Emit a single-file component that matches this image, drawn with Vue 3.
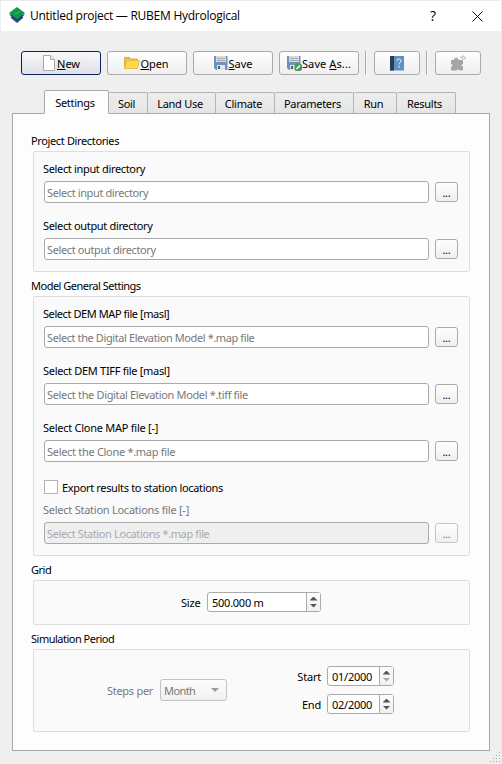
<script setup>
import { ref } from 'vue'

const tabs = [
  { name: 'Settings', w: 65 },
  { name: 'Soil', w: 39 },
  { name: 'Land Use', w: 68 },
  { name: 'Climate', w: 59 },
  { name: 'Parameters', w: 79 },
  { name: 'Run', w: 43 },
  { name: 'Results', w: 59 },
]
const active = ref('Settings')

const directories = [
  { label: 'Select input directory', hint: 'Select input directory' },
  { label: 'Select output directory', hint: 'Select output directory' },
]
const files = [
  { label: 'Select DEM MAP file [masl]', hint: 'Select the Digital Elevation Model *.map file' },
  { label: 'Select DEM TIFF file [masl]', hint: 'Select the Digital Elevation Model *.tiff file' },
  { label: 'Select Clone MAP file [-]', hint: 'Select the Clone *.map file' },
]
const dates = [
  { label: 'Start', value: '01/2000', atMin: true },
  { label: 'End', value: '02/2000', atMin: false },
]
const gripRows = [1, 2, 3, 4]
</script>

<template>
  <div class="window">
    <header class="titlebar">
      <svg class="logo" width="16" height="16" viewBox="0 0 16 16">
        <path d="M1.500 9.500h13l-1 2L8 16l-5.500-4.500z" fill="#2c4a8c" />
        <path d="M0 7.500h16L8 13.500z" fill="#1c3468" />
        <path d="M0 6L8 0l8 6-8 6.500z" fill="#0a9a4c" />
        <path d="M6 5.500l1.500 1.500L10.500 4" fill="none" stroke="#5fbf88" />
      </svg>
      <span class="title">Untitled project — RUBEM Hydrological</span>
      <span class="whatsthis">?</span>
      <svg class="close" width="11" height="11" viewBox="0 0 11 11">
        <path d="M.5.5l10 10M10.500.5l-10 10" stroke="#111" fill="none" />
      </svg>
    </header>

    <nav class="toolbar">
      <button class="tool default">
        <svg width="16" height="16" viewBox="0 0 16 16">
          <path d="M2.500.5h7l4 4v11h-11z" fill="#fff" stroke="#aaa" />
          <path d="M9.500.5v4h4" fill="#eee" stroke="#aaa" />
        </svg><span class="t"><u>N</u>ew</span>
      </button>
      <button class="tool">
        <svg width="16" height="16" viewBox="0 0 16 16">
          <path d="M.5 13.500v-11h5l1 1.500h7v2" fill="#e9bf4a" stroke="#d9b048" />
          <path d="M.5 13.500l2.500-8h12.500l-2 8z" fill="#ffd850" stroke="#e6be48" />
        </svg><span class="t"><u>O</u>pen</span>
      </button>
      <button class="tool">
        <svg width="16" height="16" viewBox="0 0 16 16">
          <path d="M1 1h13.500v14H3l-2-2z" fill="#6f92b9" />
          <path d="M3 1h10v6H3z" fill="#d9d9d9" />
          <path d="M4 3.500h8M4 5.500h8" stroke="#aaa" />
          <path d="M4 10h8v5H4z" fill="#e4e4e4" /><path d="M5 11h2v3H5z" fill="#4f5d6e" />
        </svg><span class="t"><u>S</u>ave</span>
      </button>
      <button class="tool">
        <svg width="16" height="16" viewBox="0 0 16 16">
          <path d="M1 1h13.500v14H3l-2-2z" fill="#6f92b9" />
          <path d="M3 1h10v6H3z" fill="#d9d9d9" />
          <path d="M4 3.500h8M4 5.500h8" stroke="#aaa" />
          <path d="M4 10h8v5H4z" fill="#e4e4e4" /><path d="M5 11h2v3H5z" fill="#4f5d6e" />
          <rect x="8.500" y="8.500" width="7.500" height="7.500" rx="2.500" fill="#4b9a57" />
          <path d="M10.500 14l3.500-3.500" stroke="#fff" stroke-width="1.500" />
        </svg><span class="t wide-text">Save <u>A</u>s...</span>
      </button>
      <i class="sep"></i>
      <button class="tool small">
        <svg width="16" height="16" viewBox="0 0 16 16">
          <path d="M1 1h14v14.500H1z" fill="#5f8fc6" /><path d="M1 1h4v14.500H1z" fill="#2b3c54" />
          <path d="M8 6c0-3 4-2.500 4 0 0 1.500-2 1.700-2 3.500M10 11v1.500" stroke="#fff" fill="none" />
        </svg>
      </button>
      <i class="sep"></i>
      <button class="tool small">
        <svg width="16" height="16" viewBox="0 0 16 16">
          <path d="M1.500 5.500h3c-1-3 4.500-3 3.500 0h4.500v3.500c-2 0-2 2.500 0 2.500v3.500H9.500c0-1.500-3-1.500-3 0h-5v-3c2 0 2-3 0-3z" fill="#a6a6a6" stroke="#a0a0a0" />
          <path d="M10 2l2 .5 1-2 1 1.500 1.500.5-1 2-2-.5z" fill="#eee" stroke="#b4b4b4" stroke-width=".8" />
        </svg>
      </button>
    </nav>

    <div class="tabs">
      <button
        v-for="tab in tabs" :key="tab.name" class="tab" :class="{ active: active === tab.name }"
        :style="{ width: tab.w + 'px' }" @click="active = tab.name"
      ><span>{{ tab.name }}</span></button>
    </div>

    <main class="pane">
      <h2>Project Directories</h2>
      <section class="group dirs">
        <div v-for="d in directories" :key="d.label" class="field">
          <label>{{ d.label }}</label>
          <div class="row"><div class="input">{{ d.hint }}</div><button class="browse">...</button></div>
        </div>
      </section>

      <h2>Model General Settings</h2>
      <section class="group model">
        <div v-for="f in files" :key="f.label" class="field">
          <label>{{ f.label }}</label>
          <div class="row"><div class="input">{{ f.hint }}</div><button class="browse">...</button></div>
        </div>
        <div class="check"><i class="box"></i><span>Export results to station locations</span></div>
        <div class="field off">
          <label>Select Station Locations file [-]</label>
          <div class="row"><div class="input">Select Station Locations *.map file</div><button class="browse">...</button></div>
        </div>
      </section>

      <h2>Grid</h2>
      <section class="group grid">
        <label>Size</label>
        <div class="spin wide">
          <span class="value">500.000 m</span>
          <span class="steps"><i class="up"></i><i class="down"></i></span>
        </div>
      </section>

      <h2>Simulation Period</h2>
      <section class="group period">
        <label class="muted">Steps per</label>
        <div class="select"><span>Month</span><i class="down"></i></div>
        <div class="dates">
          <div v-for="d in dates" :key="d.label" class="date">
            <label>{{ d.label }}</label>
            <div class="spin">
              <span class="value">{{ d.value }}</span>
              <span class="steps"><i class="up"></i><i class="down" :class="{ dim: d.atMin }"></i></span>
            </div>
          </div>
        </div>
      </section>
    </main>

    <svg class="grip" width="11" height="11" viewBox="0 0 11 11">
      <template v-for="r in gripRows" :key="r">
        <rect v-for="c in r" :key="c" :x="13 - c * 3" :y="r * 3 - 2" width="1" height="1" fill="#aaa" />
      </template>
    </svg>
  </div>
</template>

<style>
body { margin: 0; background: #efefef; }
</style>

<style scoped>
* { box-sizing: border-box; }
.window {
  position: relative; width: 502px; height: 764px; background: #efefef; color: #000;
  font: 11px/14px "Noto Sans", "Open Sans", sans-serif; letter-spacing: -0.34px;
  border: 1px solid #ececec; border-bottom: 0; overflow: hidden; white-space: nowrap;
}
button { font: inherit; letter-spacing: inherit; color: inherit; padding: 0; margin: 0; }
.titlebar { height: 30px; background: #fff; display: flex; align-items: center; padding-left: 8px; }
.logo { margin-bottom: 2px; }
.title { margin-left: 5px; width: 400px; font: 12px/16px "Open Sans", "Noto Sans", sans-serif; letter-spacing: -0.26px; }
.whatsthis { width: 42px; font: 14px/16px "Open Sans", sans-serif; }
.toolbar { display: flex; height: 24px; margin: 20px 0 0 20px; align-items: center; gap: 6px; }
.tool {
  width: 80px; height: 24px; border: 1px solid #aaa; border-radius: 3px; flex: none;
  background: linear-gradient(#fefefe, #efefef); display: flex; align-items: center; justify-content: center;
}
.tool.default { border-color: #0a1f5c; background: linear-gradient(#f8f8fa, #dfe1e8); }
.tool svg { flex: none; margin-bottom: 1px; }
.tool.small { width: 46px; }
.tool .t { padding-top: 2px; letter-spacing: -0.05px; margin-right: 1px; }
.tool .wide-text { letter-spacing: 0.1px; }
.sep { width: 2px; height: 24px; border-left: 1px solid #aaa; border-right: 1px solid #fafafa; margin-right: 1px; }
.tabs { display: flex; align-items: flex-end; height: 24px; margin: 15px 0 0 43px; position: relative; z-index: 1; }
.tab {
  height: 22px; border: 1px solid #b4b4b4; border-left: 0; border-bottom-color: #aaa; border-radius: 2px 2px 0 0;
  background: linear-gradient(#ededed, #e5e5e5); flex: none; padding: 1px 3px 0 0; letter-spacing: -0.28px;
}
.tab.active { height: 24px; background: #fdfdfd; border: 1px solid #aaa; border-bottom-color: #fdfdfd; }
.pane {
  margin: -1px 0 0 11px; width: 478px; height: 638px; border: 1px solid #a8a8a8; background: #fdfdfd;
  padding: 20px 19px 0 20px;
}
h2 { font: inherit; margin: 0 0 0 -2px; height: 17px; letter-spacing: -0.5px; }
h2:first-child { letter-spacing: -0.36px; }
.group { border: 1px solid #dedede; border-radius: 2px; background: #fafafa; padding: 10px 11px 0 10px; width: 437px; }
.dirs { height: 121px; margin-bottom: 7px; }
.model { height: 260px; margin-bottom: 7px; }
.grid { height: 45px; margin-bottom: 7px; }
.period { height: 83px; }
.field { height: 57px; }
.field label { display: block; height: 19px; margin-left: -1px; }
.model label { letter-spacing: -0.42px; }
.model .field:nth-child(2) label { letter-spacing: -0.3px; }
.model .field:nth-child(3) label { letter-spacing: -0.26px; }
.row { display: flex; align-items: center; gap: 6px; }
.input {
  width: 385px; height: 22px; border: 1px solid #aaa; border-radius: 3px; background: #fff; color: #787878;
  padding: 3px 2px 0; line-height: 15px;
}
.dirs .input { letter-spacing: -0.38px; }
.model .input { letter-spacing: -0.4px; }
.model .field:nth-child(2) .input { letter-spacing: -0.34px; }
.model .field:nth-child(3) .input { letter-spacing: -0.3px; }
.browse { width: 23px; height: 20px; border: 1px solid #aaa; border-radius: 3px; background: linear-gradient(#fefefe, #efefef); padding-top: 2px; letter-spacing: -0.2px; }
.check { display: flex; align-items: center; gap: 4px; height: 14px; margin: 2px 0 9px; }
.box { width: 14px; height: 14px; border: 1px solid #b4b4b4; background: #fff; }
.check span { padding-top: 2px; }
.off { color: #787878; }
.model .off label { letter-spacing: -0.25px; }
.model .off .input { background: #efefef; color: #aaa; letter-spacing: -0.38px; }
.off .browse { border-color: #c6c6c6; }
.grid { display: flex; align-items: flex-start; padding: 11px 0 0 147px; }
.grid label { width: 26px; line-height: 20px; padding-top: 1px; letter-spacing: -0.2px; }
.spin { width: 67px; height: 20px; border: 1px solid #aaa; border-radius: 3px; background: #fff; display: flex; }
.spin.wide { width: 114px; }
.value { flex: 1; padding: 0 0 0 4px; line-height: 19px; letter-spacing: -0.25px; }
.steps { width: 14px; border-left: 1px solid #aaa; background: linear-gradient(#fdfdfd, #f0f0f0); display: flex; flex-direction: column; align-items: center; justify-content: center; gap: 3px; }
.up, .down { width: 8px; height: 4px; background: #555; }
.up { clip-path: polygon(50% 0, 100% 100%, 0 100%); }
.down { clip-path: polygon(0 0, 100% 0, 50% 100%); }
.dim { background: #aaa; }
.period { display: flex; padding: 16px 0 0 73px; }
.muted { color: #787878; width: 53px; padding-top: 18px; letter-spacing: -0.28px; }
.select { width: 67px; height: 22px; margin-top: 13px; border: 1px solid #c2c2c2; border-radius: 3px; background: linear-gradient(#fdfdfd, #f0f0f0); color: #787878; display: flex; align-items: center; justify-content: space-between; padding: 2px 7px 0 3px; letter-spacing: -0.6px; }
.select .down { background: #999; margin-bottom: 2px; }
.dates { display: flex; flex-direction: column; gap: 8px; width: 167px; }
.date { display: flex; justify-content: flex-end; height: 20px; }
.date label { line-height: 20px; padding-top: 1px; margin-right: 6px; letter-spacing: -0.2px; }
.grip { position: absolute; right: 1px; bottom: 2px; }
</style>
